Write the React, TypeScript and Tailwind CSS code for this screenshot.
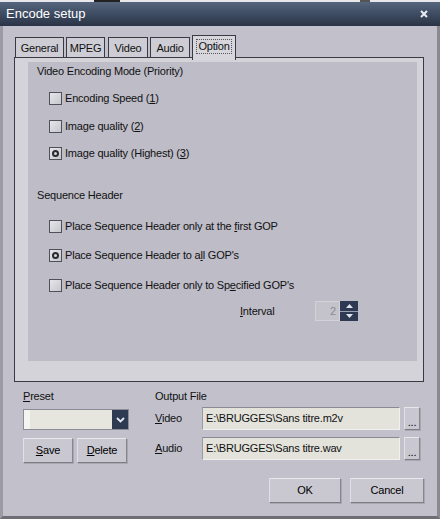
import React from "react";

const Check = ({ on }: { on?: boolean }) => (
  <span className="flex h-[13px] w-[13px] shrink-0 items-center justify-center border border-[#505058] bg-gradient-to-br from-[#e6e6ea] to-[#c6c6ce]">
    {on && <span className="h-[7px] w-[7px] rounded-full border-[2px] border-[#2a2a30] bg-[#d8d8dc]" />}
  </span>
);

const Option = ({ on, children, className = "" }: { on?: boolean; children: React.ReactNode; className?: string }) => (
  <div className={`flex h-[14px] items-center gap-[3px] pl-[21px] ${className}`}>
    <Check on={on} />
    <span className="leading-[14px]">{children}</span>
  </div>
);

const Btn = ({ children, className = "" }: { children: React.ReactNode; className?: string }) => (
  <button
    type="button"
    className={`flex items-center justify-center border border-t-[#e8e8ec] border-l-[#e0e0e6] border-r-[#86868e] border-b-[#7c7c84] bg-[#c9c8d0] text-[11px] text-black shadow-[1px_1px_0_#a8a8b0] ${className}`}
  >
    {children}
  </button>
);

const Tab = ({ label, active, className = "" }: { label: string; active?: boolean; className?: string }) =>
  active ? (
    <div className={`relative z-10 mb-[-3px] flex h-[25px] items-start justify-center border border-b-0 border-[#3a3a42] bg-[#d6d6dc] pt-[3px] ${className}`}>
      <span className="border border-dotted border-[#555] px-[1px] leading-[13px]">{label}</span>
    </div>
  ) : (
    <div className={`flex h-[20px] items-center justify-center border border-b-0 border-[#3a3a42] bg-[#cecdd5] leading-[14px] ${className}`}>
      {label}
    </div>
  );

export default function App() {
  return (
    <div className="flex h-[519px] w-[440px] flex-col overflow-hidden bg-[#c2c1cb] font-['Liberation_Sans',Arial,sans-serif] text-[11px] tracking-[-0.2px] text-[#111]">
      {/* strip of the window behind */}
      <div className="flex h-[2px] shrink-0 bg-[#e8e8ec]">
        <div className="ml-[94px] w-[26px] bg-[#222]" />
        <div className="ml-[240px] w-[10px] bg-[#555]" />
      </div>

      {/* title bar */}
      <div className="flex h-[24px] shrink-0 items-center justify-between bg-gradient-to-b from-[#56667c] via-[#3e4c62] to-[#2b3446] pl-[6px] pr-[12px]">
        <span className="text-[13px] leading-[16px] tracking-normal text-white">Encode setup</span>
        <svg width="8" height="8" viewBox="0 0 8 8">
          <path d="M1 1 L7 7 M7 1 L1 7" stroke="#e8ecf4" strokeWidth="2" />
        </svg>
      </div>

      {/* body */}
      <div className="flex flex-1 flex-col border-x-[3px] border-b-[3px] border-l-[#9c9ba4] border-r-[#8a8992] border-b-[#6e6d76]">
        {/* tabs */}
        <div className="ml-[12px] mt-[9px] flex items-end">
          <Tab label="General" className="w-[49px]" />
          <Tab label="MPEG" className="ml-[2px] w-[39px]" />
          <Tab label="Video" className="ml-[3px] w-[40px]" />
          <Tab label="Audio" className="ml-[2px] w-[40px]" />
          <Tab label="Option" active className="ml-[2px] w-[44px]" />
        </div>

        {/* panel */}
        <div className="ml-[11px] h-[325px] w-[410px] border border-[#3a3a42] bg-[#d4d3da] pb-[20px] pl-[13px] pr-[6px] pt-[4px]">
          <div className="flex h-full flex-col bg-[#bdbcc7]">
            <div className="mt-[2px] h-[14px] pl-[9px] leading-[14px]">Video Encoding Mode (Priority)</div>
            <Option className="mt-[13px]">
              Encoding Speed (<u>1</u>)
            </Option>
            <Option className="mt-[14px]">
              Image quality (<u>2</u>)
            </Option>
            <Option on className="mt-[13px]">
              Image quality (Highest) (<u>3</u>)
            </Option>

            <div className="mt-[28px] h-[14px] pl-[9px] leading-[14px]">Sequence Header</div>
            <Option className="mt-[17px]">
              Place Sequence Header only at the <u>f</u>irst GOP
            </Option>
            <Option on className="mt-[15px]">
              Place Sequence Header to a<u>l</u>l GOP's
            </Option>
            <Option className="mt-[16px]">
              Place Sequence Header only to Sp<u>e</u>cified GOP's
            </Option>

            <div className="mt-[9px] flex h-[20px] items-center">
              <span className="ml-[212px] w-[75px]">
                <u>I</u>nterval
              </span>
              <div className="flex h-[20px] w-[25px] items-center justify-end border border-[#d2d2d8] bg-[#c4c3cc] pr-[3px] text-[#8a8a92]">
                2
              </div>
              <div className="flex h-[20px] w-[18px] flex-col bg-[#2e3a52]">
                <div className="flex flex-1 items-center justify-center border-b border-[#9aa0b0]">
                  <svg width="7" height="4" viewBox="0 0 7 4">
                    <path d="M0 4 L3.5 0 L7 4 Z" fill="#dfe4ee" />
                  </svg>
                </div>
                <div className="flex flex-1 items-center justify-center">
                  <svg width="7" height="4" viewBox="0 0 7 4">
                    <path d="M0 0 L3.5 4 L7 0 Z" fill="#dfe4ee" />
                  </svg>
                </div>
              </div>
            </div>
          </div>
        </div>

        {/* bottom area */}
        <div className="mt-[7px] flex">
          <div className="ml-[20px] flex w-[110px] flex-col">
            <div className="h-[14px] leading-[14px]">
              <u>P</u>reset
            </div>
            <div className="mt-[6px] flex h-[21px] w-[106px] border border-[#8c8c96] bg-[#e6e6de]">
              <div className="w-[6px] bg-[#f4f4f0]" />
              <div className="flex-1" />
              <div className="flex w-[16px] items-center justify-center bg-[#2e3a52]">
                <svg width="9" height="6" viewBox="0 0 9 6">
                  <path d="M1 1 L4.5 4.5 L8 1" stroke="#e6eaf2" strokeWidth="1.8" fill="none" />
                </svg>
              </div>
            </div>
            <div className="mt-[8px] flex gap-[4px]">
              <Btn className="h-[25px] w-[50px]">
                <u>S</u>ave
              </Btn>
              <Btn className="h-[25px] w-[50px]">
                <u>D</u>elete
              </Btn>
            </div>
          </div>

          <div className="ml-[22px] flex flex-col">
            <div className="h-[14px] leading-[14px]">Output File</div>
            <div className="mt-[4px] flex items-center">
              <span className="w-[47px]">
                <u>V</u>ideo
              </span>
              <div className="flex h-[23px] w-[198px] items-center border border-t-[#8a8a92] border-l-[#9a9aa2] border-r-[#f0f0f0] border-b-[#f0f0f0] bg-[#e3e3dc] pl-[3px]">
                E:\BRUGGES\Sans titre.m2v
              </div>
              <Btn className="ml-[4px] h-[23px] w-[16px] items-end pb-[4px] leading-[6px]">...</Btn>
            </div>
            <div className="mt-[7px] flex items-center">
              <span className="w-[47px]">
                <u>A</u>udio
              </span>
              <div className="flex h-[23px] w-[198px] items-center border border-t-[#8a8a92] border-l-[#9a9aa2] border-r-[#f0f0f0] border-b-[#f0f0f0] bg-[#e3e3dc] pl-[3px]">
                E:\BRUGGES\Sans titre.wav
              </div>
              <Btn className="ml-[4px] h-[23px] w-[16px] items-end pb-[4px] leading-[6px]">...</Btn>
            </div>
          </div>
        </div>

        <div className="mt-[15px] flex gap-[9px] pl-[266px]">
          <Btn className="h-[25px] w-[72px]">OK</Btn>
          <Btn className="h-[25px] w-[74px]">Cancel</Btn>
        </div>
      </div>
    </div>
  );
}
